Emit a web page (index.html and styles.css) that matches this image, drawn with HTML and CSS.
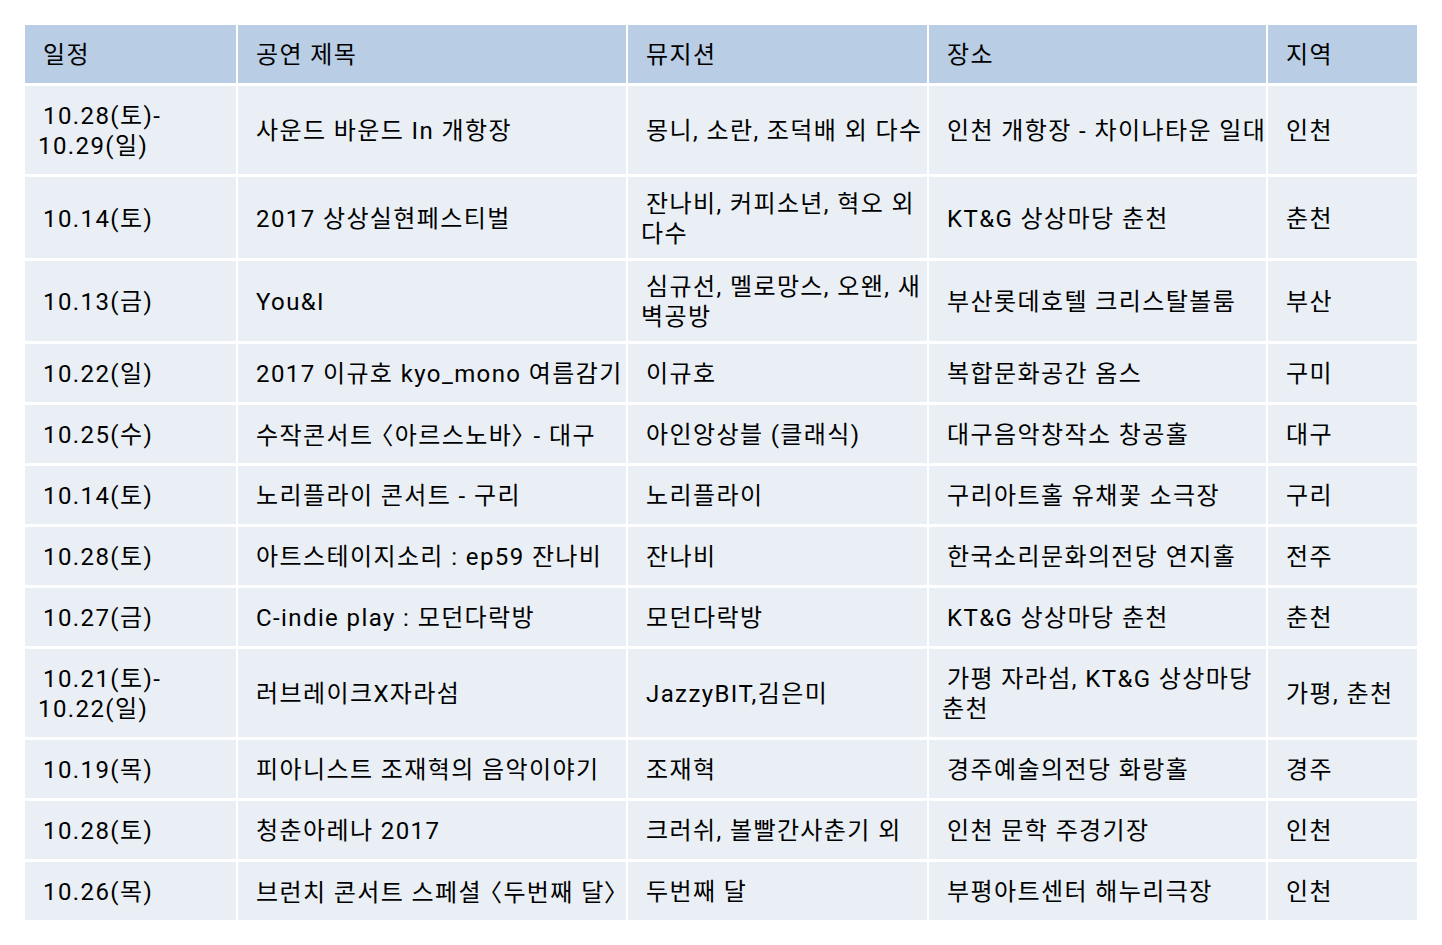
FILE: index.html
```html
<!DOCTYPE html>
<html lang="ko">
<head>
<meta charset="utf-8">
<title>공연 일정</title>
<link rel="stylesheet" href="styles.css">
</head>
<body>
<table class="schedule">
  <colgroup>
    <col class="c-date">
    <col class="c-title">
    <col class="c-artist">
    <col class="c-place">
    <col class="c-region">
  </colgroup>
  <thead>
    <tr class="row-head">
      <th>일정</th><th>공연 제목</th><th>뮤지션</th><th>장소</th><th>지역</th>
    </tr>
  </thead>
  <tbody>
    <tr class="row-1">
      <td>10.28(토)-<br>10.29(일)</td><td>사운드 바운드 In 개항장</td><td>몽니, 소란, 조덕배 외 다수</td><td>인천 개항장 - 차이나타운 일대</td><td>인천</td>
    </tr>
    <tr class="row-2">
      <td>10.14(토)</td><td>2017 상상실현페스티벌</td><td>잔나비, 커피소년, 혁오 외<br>다수</td><td>KT&amp;G 상상마당 춘천</td><td>춘천</td>
    </tr>
    <tr class="row-3">
      <td>10.13(금)</td><td>You&amp;I</td><td>심규선, 멜로망스, 오왠, 새<br>벽공방</td><td>부산롯데호텔 크리스탈볼룸</td><td>부산</td>
    </tr>
    <tr class="row">
      <td>10.22(일)</td><td>2017 이규호 kyo_mono 여름감기</td><td>이규호</td><td>복합문화공간 옴스</td><td>구미</td>
    </tr>
    <tr class="row">
      <td>10.25(수)</td><td>수작콘서트 <span class="ang">〈</span>아르스노바<span class="ang">〉</span> - 대구</td><td>아인앙상블 (클래식)</td><td>대구음악창작소 창공홀</td><td>대구</td>
    </tr>
    <tr class="row">
      <td>10.14(토)</td><td>노리플라이 콘서트 - 구리</td><td>노리플라이</td><td>구리아트홀 유채꽃 소극장</td><td>구리</td>
    </tr>
    <tr class="row">
      <td>10.28(토)</td><td>아트스테이지소리 : ep59 잔나비</td><td>잔나비</td><td>한국소리문화의전당 연지홀</td><td>전주</td>
    </tr>
    <tr class="row">
      <td>10.27(금)</td><td>C-indie play : 모던다락방</td><td>모던다락방</td><td>KT&amp;G 상상마당 춘천</td><td>춘천</td>
    </tr>
    <tr class="row-9">
      <td>10.21(토)-<br>10.22(일)</td><td>러브레이크X자라섬</td><td>JazzyBIT,김은미</td><td>가평 자라섬, KT&amp;G 상상마당<br>춘천</td><td>가평, 춘천</td>
    </tr>
    <tr class="row">
      <td>10.19(목)</td><td>피아니스트 조재혁의 음악이야기</td><td>조재혁</td><td>경주예술의전당 화랑홀</td><td>경주</td>
    </tr>
    <tr class="row">
      <td>10.28(토)</td><td>청춘아레나 2017</td><td>크러쉬, 볼빨간사춘기 외</td><td>인천 문학 주경기장</td><td>인천</td>
    </tr>
    <tr class="row">
      <td>10.26(목)</td><td>브런치 콘서트 스페셜 <span class="ang">〈</span>두번째 달<span class="ang">〉</span></td><td>두번째 달</td><td>부평아트센터 해누리극장</td><td>인천</td>
    </tr>
  </tbody>
</table>
</body>
</html>
```

FILE: styles.css
```css
html, body {
  margin: 0;
  padding: 0;
  background: #ffffff;
}

body {
  font-family: Roboto, "Noto Sans CJK KR", sans-serif;
  font-size: 24px;
  color: #000000;
}

.schedule {
  table-layout: fixed;
  width: 1396px;
  border-collapse: separate;
  border-spacing: 2px 3px;
  margin: 22px 0 0 23px;
}

.c-date { width: 211px; }
.c-title { width: 388px; }
.c-artist { width: 299px; }
.c-place { width: 337px; }
.c-region { width: 149px; }

.schedule th,
.schedule td {
  box-sizing: border-box;
  padding: 2px 0 0 13px;
  text-indent: 5px;
  text-align: left;
  vertical-align: middle;
  font-weight: normal;
  line-height: 30px;
  letter-spacing: 1.4px;
  white-space: nowrap;
  overflow: hidden;
}

.schedule th {
  background: #b9cde5;
}

.schedule td {
  background: #e9eff4;
}

.ang {
  font-family: "Noto Sans CJK KR", sans-serif;
  font-feature-settings: "palt";
  letter-spacing: 2px;
}

.row-head { height: 58px; }
.row { height: 58px; }
.row-1 { height: 88px; }
.row-2 { height: 81px; }
.row-3 { height: 80px; }
.row-9 { height: 88px; }
```
